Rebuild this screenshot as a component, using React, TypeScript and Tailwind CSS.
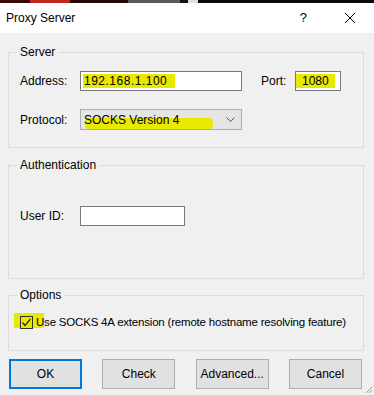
import React from 'react';

const Hl: React.FC<{ children: React.ReactNode; className?: string }> = ({ children, className }) => (
  <span className={`bg-[#e8e800] ${className ?? ''}`}>{children}</span>
);

const Btn: React.FC<{ label: string; primary?: boolean }> = ({ label, primary }) => (
  <button
    className={`w-[73px] h-[30px] text-[12px] text-black bg-[#e1e1e1] ${
      primary ? 'border-2 border-[#0078d7]' : 'border border-[#adadad]'
    }`}
  >
    {label}
  </button>
);

const App: React.FC = () => {
  return (
    <div className="w-[374px] h-[395px] bg-[#f0f0f0] overflow-hidden font-['Liberation_Sans',sans-serif] text-[11.5px] text-black relative">
      {/* strip of the desktop behind the window */}
      <div className="flex h-[3px]">
        <div className="w-[30px] bg-[#3a0a0a]" />
        <div className="w-[40px] bg-[#c0281c]" />
        <div className="w-[58px] bg-[#2a0505]" />
        <div className="w-[52px] bg-[#5a5a5a]" />
        <div className="w-[8px] bg-[#111]" />
        <div className="w-[10px] bg-[#e0e0e0]" />
        <div className="flex-1 bg-[#0a0a0a]" />
      </div>

      {/* title bar */}
      <div className="h-[30px] bg-white flex items-center pl-[6px]">
        <span className="text-[12px]">Proxy Server</span>
        <span className="ml-auto text-[13px] mr-[37px]">?</span>
        <svg width="12" height="12" viewBox="0 0 12 12" className="mr-[18px]">
          <path d="M1 1 L11 11 M11 1 L1 11" stroke="#000" strokeWidth="1" />
        </svg>
      </div>

      <div className="px-[8px] pr-[10px]">
        {/* Server */}
        <fieldset className="mt-[12px] border border-[#dcdcdc] px-[11px] pb-[17px]">
          <legend className="px-[3px] ml-[-3px] leading-[14px] text-[12px]">Server</legend>
          <div className="flex items-center mt-[12px]">
            <span className="w-[60px] text-[12px]">Address:</span>
            <div className="w-[162px] h-[20px] border border-[#7a7a7a] bg-white flex items-center pl-[2px]">
              <Hl className="pl-[1px] pr-[8px] leading-[14px] tracking-[0.5px] text-[12px]">192.168.1.100</Hl>
            </div>
            <span className="ml-[19px] w-[34px] text-[12px]">Port:</span>
            <div className="w-[46px] h-[20px] border border-[#7a7a7a] bg-white flex items-center">
              <Hl className="pl-[6px] pr-[6px] leading-[14px] text-[12px]">1080</Hl>
            </div>
          </div>
          <div className="flex items-center mt-[18px]">
            <span className="w-[60px] text-[12px]">Protocol:</span>
            <div className="w-[162px] h-[21px] border border-[#acacac] bg-[#e5e5e5] flex items-center pl-[3px] relative">
              <div className="absolute left-[4px] top-[8px] w-[128px] h-[11px] bg-[#e8e800] rounded-[4px]" />
              <span className="relative text-[12px]">SOCKS Version 4</span>
              <svg width="9" height="6" viewBox="0 0 9 6" className="absolute right-[6px] top-[7px]">
                <path d="M0.5 0.5 L4.5 4.5 L8.5 0.5" stroke="#555" strokeWidth="1" fill="none" />
              </svg>
            </div>
          </div>
        </fieldset>

        {/* Authentication */}
        <fieldset className="mt-[10px] border border-[#dcdcdc] px-[11px] pb-[52px]">
          <legend className="px-[3px] ml-[-3px] leading-[14px] text-[12px]">Authentication</legend>
          <div className="flex items-center mt-[34px]">
            <span className="w-[60px] text-[12px]">User ID:</span>
            <div className="w-[105px] h-[20px] border border-[#7a7a7a] bg-white" />
          </div>
        </fieldset>

        {/* Options */}
        <fieldset className="mt-[9px] border border-[#dcdcdc] px-[11px] pb-[19px]">
          <legend className="px-[3px] ml-[-3px] leading-[14px] text-[12px]">Options</legend>
          <div className="flex items-center mt-[12px] relative">
            <div className="absolute left-[-6px] top-[-1px] w-[30px] h-[15px] bg-[#e8e800]" />
            <div className="relative w-[13px] h-[13px] border border-[#333] flex items-center justify-center shrink-0">
              <svg width="11" height="11" viewBox="0 0 11 11">
                <path d="M1.5 5.5 L4 8.5 L9.5 2" stroke="#222" strokeWidth="1.2" fill="none" />
              </svg>
            </div>
            <span className="relative ml-[3px] whitespace-nowrap tracking-[-0.2px]">
              Use SOCKS 4A extension (remote hostname resolving feature)
            </span>
          </div>
        </fieldset>

        {/* buttons */}
        <div className="flex justify-between mt-[8px] pl-[1px] pr-[2px]">
          <Btn label="OK" primary />
          <Btn label="Check" />
          <Btn label="Advanced..." />
          <Btn label="Cancel" />
        </div>
      </div>

      {/* size grip */}
      <svg width="8" height="8" viewBox="0 0 8 8" className="absolute right-[1px] bottom-[1px]">
        <path d="M7 1 L1 7 M7 4 L4 7" stroke="#a0a0a0" strokeWidth="1" />
      </svg>
    </div>
  );
};

export default App;
